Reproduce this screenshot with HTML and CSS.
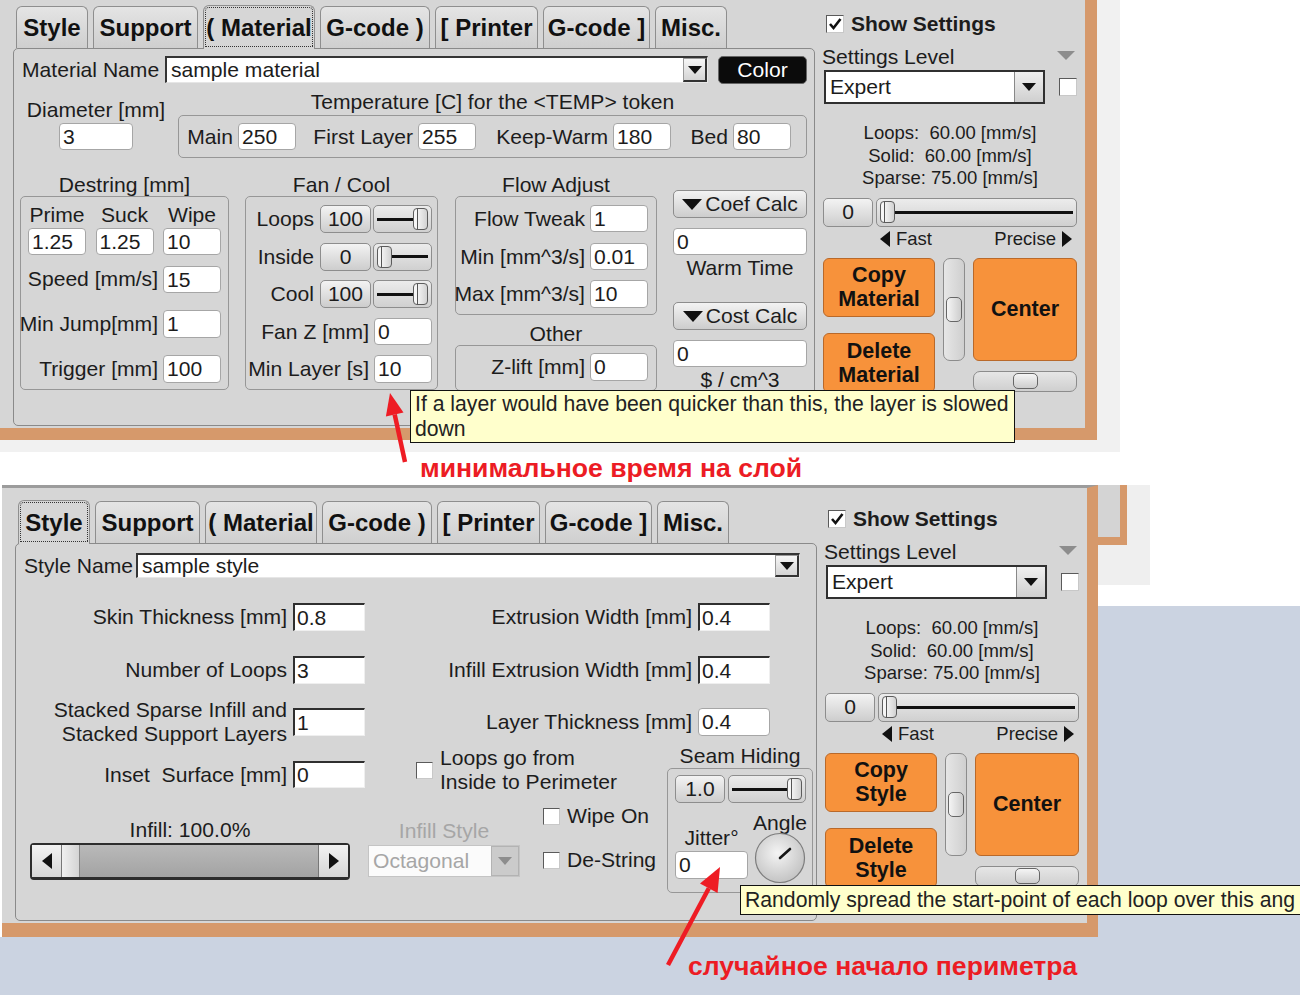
FILE: index.html
```html
<!DOCTYPE html>
<html lang="en">

<head>
    <meta charset="UTF-8">
    <meta name="viewport" content="width=device-width, initial-scale=1.0">
    <title>Settings</title>
    <link rel="stylesheet" href="styles.css">
</head>

<body>
    <!-- first shot: material tab -->
    <div class="top">
        <div class="backdrop">
            <div class="win">
                <div class="main">
                    <div class="tabs">
                        <div class="tab">Style</div>
                        <div class="tab">Support</div>
                        <div class="tab on">( Material</div>
                        <div class="tab">G-code )</div>
                        <div class="tab">[ Printer</div>
                        <div class="tab">G-code ]</div>
                        <div class="tab">Misc.</div>
                    </div>
                    <div class="pane">
                        <div class="row-name">
                            <div class="name-lbl">Material Name</div>
                            <div class="combo name-combo"><span class="val">sample material</span><span class="drop"><i class="tri"></i></span></div>
                            <div class="color-btn">Color</div>
                        </div>
                        <div class="row-temp">
                            <div class="diam">
                                <div class="lbl">Diameter [mm]</div>
                                <div class="inp">3</div>
                            </div>
                            <div class="temp">
                                <div class="title">Temperature [C] for the &lt;TEMP&gt; token</div>
                                <div class="box temp-box">
                                    <div class="frow tf1"><span>Main</span><div class="inp">250</div></div>
                                    <div class="frow tf2"><span>First Layer</span><div class="inp">255</div></div>
                                    <div class="frow tf3"><span>Keep-Warm</span><div class="inp">180</div></div>
                                    <div class="frow tf4"><span>Bed</span><div class="inp">80</div></div>
                                </div>
                            </div>
                        </div>
                        <div class="groups">
                            <div class="grp g-destr">
                                <div class="title">Destring [mm]</div>
                                <div class="box destr-box">
                                    <div class="trio heads"><span>Prime</span><span>Suck</span><span>Wipe</span></div>
                                    <div class="trio vals"><div class="inp">1.25</div><div class="inp">1.25</div><div class="inp">10</div></div>
                                    <div class="frow r1"><span>Speed [mm/s]</span><div class="inp">15</div></div>
                                    <div class="frow r2"><span>Min Jump[mm]</span><div class="inp h28">1</div></div>
                                    <div class="frow r2"><span>Trigger [mm]</span><div class="inp h28">100</div></div>
                                </div>
                            </div>
                            <div class="grp g-fan">
                                <div class="title">Fan / Cool</div>
                                <div class="box fan-box">
                                    <div class="frow">
                                        <span>Loops</span>
                                        <div class="pair"><div class="btn num">100</div><div class="slider"><i class="track"></i><i class="thumb"></i></div></div>
                                    </div>
                                    <div class="frow">
                                        <span>Inside</span>
                                        <div class="pair"><div class="btn num">0</div><div class="slider"><i class="thumb"></i><i class="track"></i></div></div>
                                    </div>
                                    <div class="frow">
                                        <span>Cool</span>
                                        <div class="pair"><div class="btn num">100</div><div class="slider"><i class="track"></i><i class="thumb"></i></div></div>
                                    </div>
                                    <div class="frow"><span>Fan Z [mm]</span><div class="inp">0</div></div>
                                    <div class="frow"><span>Min Layer [s]</span><div class="inp h28">10</div></div>
                                </div>
                            </div>
                            <div class="grp g-flow">
                                <div class="title">Flow Adjust</div>
                                <div class="box flow-box">
                                    <div class="frow"><span>Flow Tweak</span><div class="inp">1</div></div>
                                    <div class="frow"><span>Min [mm^3/s]</span><div class="inp">0.01</div></div>
                                    <div class="frow"><span>Max [mm^3/s]</span><div class="inp h28">10</div></div>
                                </div>
                                <div class="title other-title">Other</div>
                                <div class="box other-box">
                                    <div class="frow"><span>Z-lift [mm]</span><div class="inp h28">0</div></div>
                                </div>
                            </div>
                            <div class="g-calc">
                                <div class="btn calc-btn"><i class="tri big"></i>Coef Calc</div>
                                <div class="inp wide">0</div>
                                <div class="title">Warm Time</div>
                                <div class="btn calc-btn second"><i class="tri big"></i>Cost Calc</div>
                                <div class="inp wide">0</div>
                                <div class="title">$ / cm^3</div>
                            </div>
                        </div>
                    </div>
                </div>
                <div class="side">
                    <div class="show"><span class="chk"><svg width="16" height="16" viewBox="0 0 16 16"><path d="M3 8 L6.5 12 L13.5 3" fill="none" stroke="#111" stroke-width="2.6"/></svg></span>Show Settings</div>
                    <div class="lvl"><span>Settings Level</span><i class="gtri"></i></div>
                    <div class="lvl-row">
                        <div class="combo big"><span class="val">Expert</span><span class="drop"><i class="tri"></i></span></div>
                        <span class="chk"></span>
                    </div>
                    <div class="speeds">
                        <div>Loops:&nbsp; 60.00 [mm/s]</div>
                        <div>Solid:&nbsp; 60.00 [mm/s]</div>
                        <div>Sparse: 75.00 [mm/s]</div>
                    </div>
                    <div class="sl-row">
                        <div class="btn num">0</div>
                        <div class="slider"><i class="thumb"></i><i class="track"></i></div>
                    </div>
                    <div class="fp"><span><i class="ltri"></i>Fast</span><span>Precise<i class="rtri"></i></span></div>
                    <div class="act">
                        <div class="col">
                            <div class="obtn copy">Copy<br>Material</div>
                            <div class="obtn del">Delete<br>Material</div>
                        </div>
                        <div class="vscroll"><i class="vthumb"></i></div>
                        <div class="col">
                            <div class="obtn center-btn">Center</div>
                            <div class="hscroll"><i class="hthumb"></i></div>
                        </div>
                    </div>
                </div>
            </div>
        </div>
        <div class="cap cap1">минимальное время на слой</div>
    </div>

    <!-- second shot: style tab -->
    <div class="bottom">
        <div class="win win2">
            <div class="main">
                <div class="tabs">
                    <div class="tab on">Style</div>
                    <div class="tab">Support</div>
                    <div class="tab">( Material</div>
                    <div class="tab">G-code )</div>
                    <div class="tab">[ Printer</div>
                    <div class="tab">G-code ]</div>
                    <div class="tab">Misc.</div>
                </div>
                <div class="pane">
                    <div class="row-name n2">
                        <div class="style-lbl">Style Name</div>
                        <div class="combo style-combo"><span class="val">sample style</span><span class="drop"><i class="tri"></i></span></div>
                    </div>
                    <div class="sform">
                        <div class="srow"><span>Skin Thickness [mm]</span><div class="inp sq">0.8</div></div>
                        <div class="srow"><span>Extrusion Width [mm]</span><div class="inp sq">0.4</div></div>
                        <div class="srow"><span>Number of Loops</span><div class="inp sq">3</div></div>
                        <div class="srow"><span>Infill Extrusion Width [mm]</span><div class="inp sq">0.4</div></div>
                        <div class="srow"><span class="two">Stacked Sparse Infill and<br>Stacked Support Layers</span><div class="inp sq">1</div></div>
                        <div class="srow"><span>Layer Thickness [mm]</span><div class="inp h28 w72">0.4</div></div>
                    </div>
                    <div class="sbottom">
                        <div class="sleft">
                            <div class="r4">
                                <div class="srow r4a"><span>Inset&nbsp; Surface [mm]</span><div class="inp sq h27">0</div></div>
                                <div class="loopchk"><span class="chk small"></span><span>Loops go from<br>Inside to Perimeter</span></div>
                            </div>
                            <div class="binfill">
                                <div class="infill">
                                    <div class="title">Infill: 100.0%</div>
                                    <div class="bigscroll">
                                        <span class="sb-btn"><i class="ltri"></i></span>
                                        <span class="sb-thumb"></span>
                                        <span class="sb-track"></span>
                                        <span class="sb-btn r"><i class="rtri"></i></span>
                                    </div>
                                </div>
                                <div class="istyle">
                                    <div class="title">Infill Style</div>
                                    <div class="combo dis"><span class="val">Octagonal</span><span class="drop"><i class="tri"></i></span></div>
                                </div>
                                <div class="chks">
                                    <div class="crow"><span class="chk small"></span>Wipe On</div>
                                    <div class="crow second"><span class="chk small"></span>De-String</div>
                                </div>
                            </div>
                        </div>
                        <div class="seam">
                            <div class="title">Seam Hiding</div>
                            <div class="box seam-box">
                                <div class="seam-sl">
                                    <div class="btn num">1.0</div>
                                    <div class="slider"><i class="track"></i><i class="thumb"></i></div>
                                </div>
                                <div class="jit">
                                    <div class="jcol">
                                        <div class="title">Jitter°</div>
                                        <div class="inp h28 jinp">0</div>
                                    </div>
                                    <div class="acol">
                                        <div class="title">Angle</div>
                                        <svg class="knob" width="52" height="52" viewBox="0 0 52 52">
                                            <defs>
                                                <radialGradient id="kg" cx="45%" cy="40%" r="60%">
                                                    <stop offset="0" stop-color="#f4f4f4"/>
                                                    <stop offset="1" stop-color="#c4c4c4"/>
                                                </radialGradient>
                                            </defs>
                                            <circle cx="26" cy="26" r="24.5" fill="url(#kg)" stroke="#7c7c7c" stroke-width="1.2"/>
                                            <path d="M26 26 L36 17" stroke="#151515" stroke-width="2.6" stroke-linecap="round"/>
                                        </svg>
                                    </div>
                                </div>
                            </div>
                        </div>
                    </div>
                </div>
            </div>
            <div class="side">
                <div class="show"><span class="chk"><svg width="16" height="16" viewBox="0 0 16 16"><path d="M3 8 L6.5 12 L13.5 3" fill="none" stroke="#111" stroke-width="2.6"/></svg></span>Show Settings</div>
                <div class="lvl"><span>Settings Level</span><i class="gtri"></i></div>
                <div class="lvl-row">
                    <div class="combo big"><span class="val">Expert</span><span class="drop"><i class="tri"></i></span></div>
                    <span class="chk"></span>
                </div>
                <div class="speeds">
                    <div>Loops:&nbsp; 60.00 [mm/s]</div>
                    <div>Solid:&nbsp; 60.00 [mm/s]</div>
                    <div>Sparse: 75.00 [mm/s]</div>
                </div>
                <div class="sl-row">
                    <div class="btn num">0</div>
                    <div class="slider"><i class="thumb"></i><i class="track"></i></div>
                </div>
                <div class="fp"><span><i class="ltri"></i>Fast</span><span>Precise<i class="rtri"></i></span></div>
                <div class="act">
                    <div class="col">
                        <div class="obtn copy">Copy<br>Style</div>
                        <div class="obtn del">Delete<br>Style</div>
                    </div>
                    <div class="vscroll"><i class="vthumb"></i></div>
                    <div class="col">
                        <div class="obtn center-btn">Center</div>
                        <div class="hscroll"><i class="hthumb"></i></div>
                    </div>
                </div>
            </div>
        </div>
        <div class="outside">
            <div class="frag-zone">
                <div class="frag"><div class="fwin"></div></div>
            </div>
            <div class="blue"></div>
        </div>
        <div class="blue-row">
            <div class="cap cap2">случайное начало периметра</div>
        </div>
    </div>

    <!-- overlays: tooltips and arrows -->
    <div class="tip tip1">If a layer would have been quicker than this, the layer is slowed<br>down</div>
    <div class="tip tip2">Randomly spread the start-point of each loop over this ang</div>
    <svg class="arrows" width="1300" height="1000" viewBox="0 0 1300 1000">
        <line x1="405" y1="462" x2="394.7" y2="414.5" stroke="#ee1c24" stroke-width="4.5"/>
        <polygon points="390,393 403.5,412.6 385.9,416.4" fill="#ee1c24"/>
        <line x1="668" y1="965" x2="708.8" y2="888.2" stroke="#ee1c24" stroke-width="4.5"/>
        <polygon points="720,867 717.6,892.9 700,883.5" fill="#ee1c24"/>
    </svg>
</body>

</html>
```

FILE: styles.css
```css
* {
    box-sizing: border-box;
}

body {
    margin: 0;
    width: 1300px;
    height: 1000px;
    overflow: hidden;
    position: relative;
    background: #fff;
    font-family: "Liberation Sans", Arial, "Noto Sans", sans-serif;
    font-size: 21.1px;
    color: #1c1c1c;
}

i {
    display: block;
    font-style: normal;
}

/* page pieces */

.top {
    height: 485px;
}

.backdrop {
    width: 1120px;
    height: 452px;
    background: #f1f1f1;
}

.cap {
    color: #ec1c24;
    font-weight: bold;
    font-size: 26.6px;
    white-space: nowrap;
}

.cap1 {
    height: 33px;
    line-height: 33px;
    padding-left: 420px;
}

.bottom {
    display: grid;
    grid-template-columns: 1098px 1fr;
    grid-template-rows: 452px 58px;
}

.outside {
    display: flex;
    flex-direction: column;
}

.frag-zone {
    height: 121px;
    background: #fff;
}

.frag {
    width: 52px;
    height: 100px;
    background: #efefef;
}

.fwin {
    width: 29px;
    height: 60px;
    background: #d4d4d4;
    border-right: 7px solid #d6996b;
    border-bottom: 8px solid #d6996b;
}

.blue {
    flex: 1;
    background: #cbd3e1;
}

.blue-row {
    grid-column: 1 / 3;
    background: #cbd3e1;
}

.cap2 {
    line-height: 58px;
    padding-left: 688px;
}

/* window */

.win {
    display: flex;
    width: 1097px;
    height: 440px;
    background: #d6d6d6;
    border-right: 12px solid #d6996b;
    border-bottom: 12px solid #d6996b;
}

.win2 {
    width: 1096px;
    height: 452px;
    margin-left: 2px;
    border-top: 3px solid #9c9c9c;
    padding-top: 7px;
    border-right-width: 11px;
    border-bottom-width: 14px;
}

.main {
    width: 815px;
    flex: none;
}

.tabs {
    display: flex;
    align-items: flex-end;
    gap: 5px;
    height: 43px;
    margin: 5px 0 0 16px;
}

.tab {
    height: 42px;
    border: 1px solid #8e8e8e;
    border-bottom: 0;
    border-radius: 6px 6px 0 0;
    background: linear-gradient(#e4e4e4, #cfcfcf);
    font-size: 24px;
    font-weight: bold;
    color: #111;
    display: flex;
    align-items: center;
    justify-content: center;
    white-space: nowrap;
}

.tab.on {
    height: 44px;
    margin-bottom: -1px;
    position: relative;
    background: #d6d6d6;
    outline: 1px dotted #333;
    outline-offset: -3px;
}

.tab:nth-child(1) { width: 72px; }
.tab:nth-child(2) { width: 105px; }
.tab:nth-child(3) { width: 112px; }
.tab:nth-child(4) { width: 110px; }
.tab:nth-child(5) { width: 103px; }
.tab:nth-child(6) { width: 107px; }
.tab:nth-child(7) { width: 72px; }

.pane {
    margin-left: 13px;
    width: 802px;
    height: 378px;
    border: 1px solid #8a8a8a;
    border-radius: 5px;
}

/* common controls */

.inp {
    width: 58px;
    height: 27px;
    flex: none;
    background: #fff;
    border: 1px solid #a6a6a6;
    border-radius: 4px;
    padding-left: 3px;
    line-height: 25px;
    white-space: nowrap;
    overflow: hidden;
}

.inp.h28 {
    height: 28px;
    line-height: 26px;
}

.inp.w72 {
    width: 72px;
}

.inp.sq {
    width: 72px;
    height: 28px;
    border-radius: 0;
    border-width: 2px 1px 1px 2px;
    border-color: #2f2f2f #efefef #efefef #2f2f2f;
    padding-left: 2px;
    line-height: 25px;
}

.inp.sq.h27 {
    height: 27px;
    line-height: 24px;
}

.btn {
    flex: none;
    border: 1px solid #8d8d8d;
    border-radius: 5px;
    background: linear-gradient(#f3f3f3, #cdcdcd);
    display: flex;
    align-items: center;
    justify-content: center;
}

.tri {
    width: 0;
    height: 0;
    border-left: 7px solid transparent;
    border-right: 7px solid transparent;
    border-top: 8px solid #111;
}

.tri.big {
    border-left-width: 10px;
    border-right-width: 10px;
    border-top-width: 11px;
    margin-right: 3px;
}

.ltri {
    width: 0;
    height: 0;
    border-top: 8px solid transparent;
    border-bottom: 8px solid transparent;
    border-right: 10px solid #111;
}

.rtri {
    width: 0;
    height: 0;
    border-top: 8px solid transparent;
    border-bottom: 8px solid transparent;
    border-left: 10px solid #111;
}

.combo {
    display: flex;
    background: #fff;
    border-style: solid;
    border-width: 2px 1px 1px 2px;
    border-color: #353535 #e6e6e6 #e6e6e6 #353535;
}

.combo .val {
    flex: 1;
    align-self: center;
    padding-left: 4px;
    white-space: nowrap;
}

.combo .drop {
    width: 24px;
    background: linear-gradient(#f6f6f6, #d4d4d4);
    border: 1px solid #999;
    border-right: 2px solid #333;
    border-bottom: 2px solid #333;
    display: flex;
    align-items: center;
    justify-content: center;
}

.chk {
    width: 18px;
    height: 18px;
    flex: none;
    display: flex;
    align-items: center;
    justify-content: center;
    background: #fff;
    border: 1px solid;
    border-color: #5a5a5a #c8c8c8 #c8c8c8 #5a5a5a;
}

.chk.small {
    width: 17px;
    height: 17px;
}

.slider {
    display: flex;
    align-items: center;
    padding: 0 3px;
    border: 1px solid #8d8d8d;
    border-radius: 5px;
    background: linear-gradient(#ececec, #d0d0d0);
}

.slider .track {
    flex: 1;
    height: 3px;
    background: #111;
}

.slider .thumb {
    width: 15px;
    height: 22px;
    border: 1px solid #5c5c5c;
    border-radius: 4px;
    background: linear-gradient(90deg, #f6f6f6 0 3px, #555 3px 4px, #f2f2f2 4px, #d2d2d2);
}

.title {
    text-align: center;
    line-height: 24px;
    white-space: nowrap;
}

.box {
    border: 1px solid #979797;
    border-radius: 5px;
}

.frow {
    display: flex;
    justify-content: flex-end;
    align-items: center;
    gap: 5px;
    height: 28px;
    white-space: nowrap;
}

/* material pane */

.row-name {
    display: flex;
    align-items: center;
    height: 27px;
    margin-top: 7px;
    padding-left: 8px;
}

.name-lbl {
    width: 143px;
    white-space: nowrap;
}

.name-combo {
    width: 543px;
    height: 27px;
}

.color-btn {
    width: 89px;
    height: 28px;
    margin-left: 10px;
    background: #0b0b0b;
    color: #fff;
    border: 1px solid #666;
    border-radius: 5px;
    text-align: center;
    line-height: 26px;
}

.row-temp {
    display: flex;
    margin-top: 7px;
}

.diam {
    width: 164px;
    padding-top: 8px;
    display: flex;
    flex-direction: column;
    align-items: center;
}

.diam .lbl {
    line-height: 24px;
}

.diam .inp {
    width: 74px;
    margin-top: 1px;
}

.temp {
    width: 629px;
}

.temp-box {
    height: 43px;
    margin-top: 1px;
    display: flex;
    align-items: center;
    padding-left: 9px;
}

.tf1 { width: 108px; }
.tf2 { width: 171px; margin-left: 9px; }
.tf3 { width: 183px; margin-left: 12px; }
.tf4 { width: 111px; margin-left: 9px; }

.groups {
    display: flex;
    align-items: flex-start;
    margin-top: 15px;
    padding-left: 6px;
}

.grp > .title {
    line-height: 23px;
}

.g-destr {
    width: 209px;
    flex: none;
}

.destr-box {
    height: 194px;
    padding: 6px 7px 0;
}

.trio {
    display: grid;
    grid-template-columns: repeat(3, 58px);
    column-gap: 9.5px;
}

.heads {
    text-align: center;
    line-height: 24px;
}

.vals {
    margin-top: 1px;
}

.destr-box .r1 {
    margin-top: 10px;
}

.destr-box .r2 {
    margin-top: 17px;
}

.g-fan {
    width: 193px;
    flex: none;
    margin-left: 16px;
}

.fan-box {
    height: 194px;
    padding: 8px 5px 0 0;
}

.fan-box .frow + .frow {
    margin-top: 9.5px;
}

.pair {
    display: flex;
    gap: 2px;
    margin-left: 1px;
}

.num {
    width: 51px;
    height: 28px;
}

.pair .slider {
    width: 59px;
    height: 28px;
}

.g-flow {
    width: 202px;
    flex: none;
    margin-left: 17px;
}

.flow-box {
    height: 119px;
    padding: 8px 8px 0 0;
}

.flow-box .frow {
    height: 27px;
}

.flow-box .frow + .frow {
    margin-top: 11px;
}

.flow-box .frow:last-child {
    height: 28px;
    margin-top: 10px;
}

.other-title {
    margin-top: 7px;
}

.other-box {
    height: 46px;
    padding: 7px 8px 0 0;
}

.g-calc {
    width: 134px;
    flex: none;
    margin-left: 16px;
    padding-top: 17px;
}

.calc-btn {
    height: 28px;
}

.calc-btn.second {
    margin-top: 22px;
}

.inp.wide {
    width: 100%;
    margin-top: 10px;
}

.g-calc .title {
    margin-top: 1px;
}

/* right side panel */

.side {
    width: 270px;
    flex: none;
}

.show {
    display: flex;
    align-items: center;
    gap: 7px;
    height: 18px;
    margin: 15px 0 0 11px;
    font-size: 21px;
    font-weight: bold;
    white-space: nowrap;
}

.lvl {
    display: flex;
    justify-content: space-between;
    align-items: center;
    line-height: 24px;
    margin: 12px 10px 0 7px;
}

.gtri {
    width: 0;
    height: 0;
    border-left: 9px solid transparent;
    border-right: 9px solid transparent;
    border-top: 9px solid #8d8d8d;
    margin-top: -3px;
}

.lvl-row {
    display: flex;
    align-items: center;
    height: 34px;
    margin: 1px 0 0 9px;
}

.combo.big {
    width: 221px;
    height: 34px;
    border: 2px solid #303030;
}

.combo.big .drop {
    width: 29px;
    border: 0;
    border-left: 1px solid #888;
    background: linear-gradient(#f0f0f0, #cfcfcf);
}

.lvl-row .chk {
    margin-left: 14px;
}

.speeds {
    margin-top: 18px;
    text-align: center;
    font-size: 18.5px;
    line-height: 22.5px;
}

.sl-row {
    display: flex;
    gap: 3px;
    height: 29px;
    margin: 8px 0 0 8px;
}

.sl-row .num {
    width: 50px;
    height: 29px;
}

.sl-row .slider {
    width: 201px;
    height: 29px;
}

.fp {
    display: flex;
    justify-content: space-between;
    margin: 1px 13px 0 65px;
    font-size: 18.5px;
    line-height: 22px;
}

.fp span {
    display: flex;
    align-items: center;
    gap: 6px;
}

.act {
    display: flex;
    gap: 8px;
    margin: 8px 0 0 8px;
}

.act .col {
    display: flex;
    flex-direction: column;
}

.obtn {
    width: 112px;
    display: flex;
    align-items: center;
    justify-content: center;
    text-align: center;
    background: #f7923b;
    border: 1px solid #b9692a;
    border-radius: 6px;
    font-weight: bold;
    font-size: 21.5px;
    line-height: 24px;
    color: #111;
}

.copy {
    height: 59px;
}

.del {
    height: 60px;
    margin-top: 16px;
}

.center-btn {
    width: 104px;
    height: 103px;
}

.vscroll {
    width: 22px;
    height: 103px;
    display: flex;
    align-items: center;
    justify-content: center;
    border: 1px solid #8c8c8c;
    border-radius: 7px;
    background: linear-gradient(90deg, #e6e6e6, #cfcfcf);
}

.vthumb {
    width: 16px;
    height: 25px;
    border: 1px solid #666;
    border-radius: 5px;
    background: linear-gradient(90deg, #f5f5f5, #cdcdcd);
}

.hscroll {
    width: 104px;
    height: 21px;
    margin-top: 10px;
    display: flex;
    align-items: center;
    justify-content: center;
    border: 1px solid #8c8c8c;
    border-radius: 7px;
    background: linear-gradient(#e6e6e6, #cfcfcf);
}

.hthumb {
    width: 25px;
    height: 16px;
    border: 1px solid #666;
    border-radius: 5px;
    background: linear-gradient(#f5f5f5, #cdcdcd);
}

/* style pane */

.row-name.n2 {
    height: 25px;
    margin-top: 9px;
}

.style-lbl {
    width: 112px;
    white-space: nowrap;
}

.style-combo {
    width: 664px;
    height: 25px;
}

.sform {
    display: grid;
    grid-template-columns: 349px 405px;
    grid-auto-rows: 28px;
    row-gap: 24.5px;
    margin-top: 25px;
}

.srow {
    display: flex;
    justify-content: flex-end;
    align-items: center;
    gap: 6px;
    white-space: nowrap;
}

.srow .two {
    text-align: right;
    line-height: 24px;
}

.sbottom {
    display: flex;
    margin-top: 8px;
}

.sleft {
    width: 651px;
    flex: none;
}

.r4 {
    display: flex;
    height: 50px;
}

.r4a {
    width: 349px;
    height: 27px;
    margin-top: 17px;
}

.loopchk {
    display: flex;
    align-items: center;
    gap: 7px;
    margin: 2px 0 0 51px;
    line-height: 24px;
    white-space: nowrap;
}

.binfill {
    display: flex;
    height: 78px;
    margin-top: 10px;
}

.infill {
    width: 320px;
    margin: 14px 0 0 14px;
}

.bigscroll {
    display: flex;
    height: 37px;
    margin-top: 1px;
    border: 2px solid #2d2d2d;
    border-bottom-width: 3px;
    border-radius: 4px;
    background: linear-gradient(#b9b9b9, #a3a3a3);
}

.sb-btn {
    width: 30px;
    display: flex;
    align-items: center;
    justify-content: center;
    background: linear-gradient(#f2f2f2, #d6d6d6);
    border-right: 1px solid #777;
}

.sb-btn.r {
    border-right: 0;
    border-left: 1px solid #777;
}

.sb-thumb {
    width: 18px;
    background: linear-gradient(90deg, #f0f0f0, #d4d4d4);
    border-right: 1px solid #888;
}

.sb-track {
    flex: 1;
}

.istyle {
    width: 152px;
    margin: 15px 0 0 18px;
    color: #a6a6a6;
}

.combo.dis {
    height: 32px;
    margin-top: 2px;
    border: 1px solid #c4c4c4;
    background: #fbfbfb;
}

.combo.dis .drop {
    width: 28px;
    background: #cbcbcb;
    border: 1px solid #b3b3b3;
}

.combo.dis .tri {
    border-top-color: #8d8d8d;
}

.chks {
    margin-left: 23px;
}

.crow {
    display: flex;
    align-items: center;
    gap: 7px;
    line-height: 24px;
    white-space: nowrap;
}

.crow.second {
    margin-top: 20px;
}

.seam {
    width: 146px;
    flex: none;
}

.seam-box {
    height: 125px;
    padding: 6px 0 0 7px;
}

.seam-sl {
    display: flex;
    gap: 3px;
}

.seam-sl .num {
    width: 50px;
}

.seam-sl .slider {
    width: 78px;
    height: 28px;
}

.jit {
    display: flex;
    margin-top: 8px;
}

.jcol {
    width: 73px;
    padding-top: 15px;
}

.jinp {
    width: 73px;
    margin-top: 1px;
}

.acol {
    width: 56px;
    margin-left: 4px;
    display: flex;
    flex-direction: column;
    align-items: center;
}

.knob {
    display: block;
    margin-top: -3px;
}

/* overlays */

.tip {
    position: absolute;
    background: #ffffcc;
    border: 1px solid #111;
    color: #222;
    font-size: 21.2px;
    padding: 0 4px;
    white-space: nowrap;
}

.tip1 {
    left: 410px;
    top: 390px;
    width: 605px;
    height: 53px;
    line-height: 25px;
}

.tip2 {
    left: 740px;
    top: 885px;
    width: 560px;
    height: 30px;
    line-height: 28px;
    border-right: 0;
    overflow: hidden;
}

.arrows {
    position: absolute;
    left: 0;
    top: 0;
    pointer-events: none;
}
```
